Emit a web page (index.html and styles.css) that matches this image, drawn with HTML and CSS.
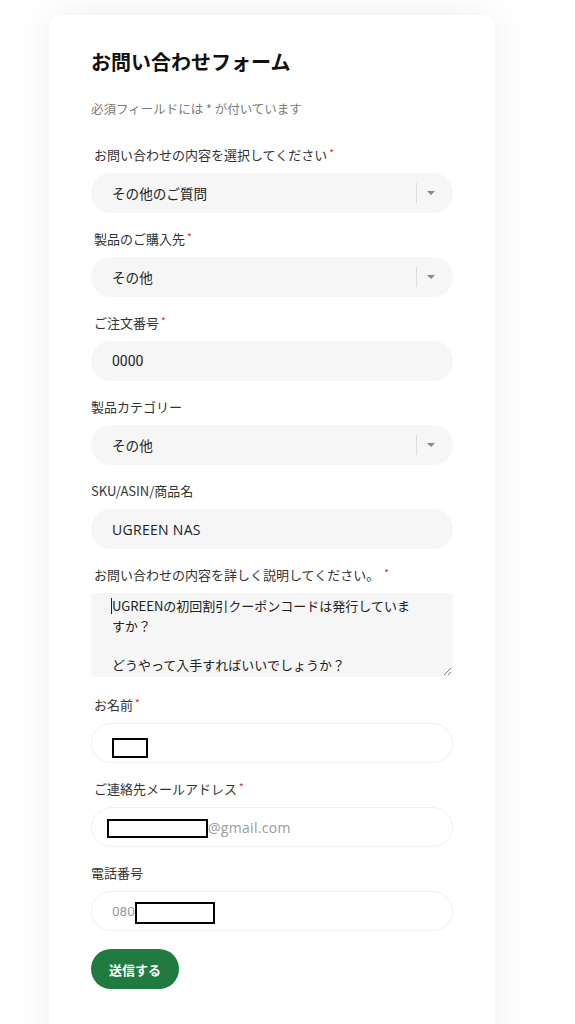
FILE: index.html
```html
<!DOCTYPE html>
<html lang="ja">
<head>
<meta charset="utf-8">
<title>お問い合わせフォーム</title>
<link rel="stylesheet" href="styles.css">
</head>
<body>
<div class="card">
  <h1 class="title">お問い合わせフォーム</h1>
  <p class="note">必須フィールドには * が付いています</p>

  <div class="group">
    <div class="label">お問い合わせの内容を選択してください<span class="req">*</span></div>
    <div class="field select"><span class="value">その他のご質問</span><span class="divider"></span><span class="caret"></span></div>
  </div>

  <div class="group">
    <div class="label">製品のご購入先<span class="req">*</span></div>
    <div class="field select"><span class="value">その他</span><span class="divider"></span><span class="caret"></span></div>
  </div>

  <div class="group">
    <div class="label">ご注文番号<span class="req">*</span></div>
    <div class="field"><span class="value digits">0000</span></div>
  </div>

  <div class="group">
    <div class="label label-flush">製品カテゴリー</div>
    <div class="field select"><span class="value">その他</span><span class="divider"></span><span class="caret"></span></div>
  </div>

  <div class="group">
    <div class="label label-flush">SKU/ASIN/商品名</div>
    <div class="field"><span class="value wide">UGREEN NAS</span></div>
  </div>

  <div class="group group-text">
    <div class="label">お問い合わせの内容を詳しく説明してください。 <span class="req">*</span></div>
    <div class="textarea"><span class="cursor"></span>UGREENの初回割引クーポンコードは発行していま<br>すか？<br><br>どうやって入手すればいいでしょうか？<span class="grip"></span></div>
  </div>

  <div class="group">
    <div class="label">お名前<span class="req">*</span></div>
    <div class="field plain"><span class="redact redact-name"></span></div>
  </div>

  <div class="group">
    <div class="label">ご連絡先メールアドレス<span class="req">*</span></div>
    <div class="field plain email"><span class="redact redact-mail"></span><span class="muted wide">@gmail.com</span></div>
  </div>

  <div class="group">
    <div class="label label-flush">電話番号</div>
    <div class="field plain"><span class="muted digits-sm">080</span><span class="redact redact-phone"></span></div>
  </div>

  <button class="submit" type="button">送信する</button>
</div>
</body>
</html>
```

FILE: styles.css
```css
* { box-sizing: border-box; }

html, body {
  margin: 0;
  padding: 0;
  background: #ffffff;
}

body {
  font-family: "Noto Sans CJK JP", "Noto Sans", sans-serif;
  color: #222;
  overflow: hidden;
}

.card {
  margin: 15px 0 0 49px;
  width: 446px;
  min-height: 1100px;
  background: #fff;
  border-radius: 10px;
  box-shadow: 0 0 36px rgba(0, 0, 0, 0.07);
  padding: 33px 42px 40px;
}

.title {
  margin: 0;
  font-size: 20px;
  line-height: 28px;
  font-weight: 700;
  color: #111;
}

.note {
  margin: 23px 0 0;
  font-size: 12.5px;
  line-height: 20px;
  color: #7a7a7a;
}

.group {
  margin-top: 16px;
}

.note + .group {
  margin-top: 26px;
}

.group-text {
  padding-bottom: 2px;
}

.label {
  height: 20px;
  font-size: 13px;
  line-height: 20px;
  color: #333;
  padding-left: 3px;
  margin-bottom: 8px;
  white-space: nowrap;
}

.label-flush {
  padding-left: 0;
}

.req {
  position: relative;
  top: -3px;
  color: #e02424;
  font-size: 10px;
  line-height: 0;
  margin-left: 2px;
}

.field {
  height: 40px;
  border-radius: 20px;
  background: #f5f6f5;
  display: flex;
  align-items: center;
  padding: 0 21px;
  font-size: 13.6px;
  color: #222;
}

.field.plain {
  background: #fff;
  border: 1px solid #f1f1f1;
  padding-left: 20px;
}

.field.email {
  padding-left: 15px;
}

.value {
  flex: 1;
}

.digits {
  font-family: Roboto, "Noto Sans", sans-serif;
  font-size: 14px;
}

.digits-sm {
  font-family: Roboto, "Noto Sans", sans-serif;
  font-size: 13.5px;
}

.wide {
  font-family: "Open Sans", sans-serif;
  font-size: 14px;
  letter-spacing: 0.3px;
}

.select {
  padding-right: 0;
}

.divider {
  width: 1px;
  height: 20px;
  background: #dcdcdc;
  margin-right: 10px;
}

.caret {
  width: 0;
  height: 0;
  border-left: 4px solid transparent;
  border-right: 4px solid transparent;
  border-top: 4px solid #888;
  margin-right: 18px;
}

.textarea {
  position: relative;
  height: 84px;
  border-radius: 4px;
  background: #f5f6f5;
  padding: 3px 8px 0 21px;
  font-size: 13px;
  line-height: 19.5px;
  color: #222;
  overflow: hidden;
  white-space: nowrap;
}

.cursor {
  position: absolute;
  left: 20px;
  top: 5px;
  width: 1px;
  height: 16px;
  background: #222;
}

.grip {
  position: absolute;
  right: 2px;
  bottom: 2px;
  width: 7px;
  height: 7px;
  background:
    linear-gradient(135deg, transparent 45%, #888 45%, #888 55%, transparent 55%),
    linear-gradient(135deg, transparent 75%, #888 75%, #888 85%, transparent 85%);
}

.redact {
  display: inline-block;
  border: 2px solid #000;
  background: #fff;
}

.redact-name {
  width: 36px;
  height: 20px;
  margin-top: 9px;
}

.redact-mail {
  width: 101px;
  height: 19px;
  margin-top: 2px;
}

.redact-phone {
  width: 80px;
  height: 22px;
  margin-top: 4px;
}

.muted {
  color: #9a9a9a;
}

.submit {
  margin-top: 18px;
  width: 88px;
  height: 40px;
  border: none;
  border-radius: 20px;
  background: #217a3f;
  color: #fff;
  font-family: "Noto Sans CJK JP", sans-serif;
  font-size: 13px;
  font-weight: 700;
  padding: 0;
}
```
